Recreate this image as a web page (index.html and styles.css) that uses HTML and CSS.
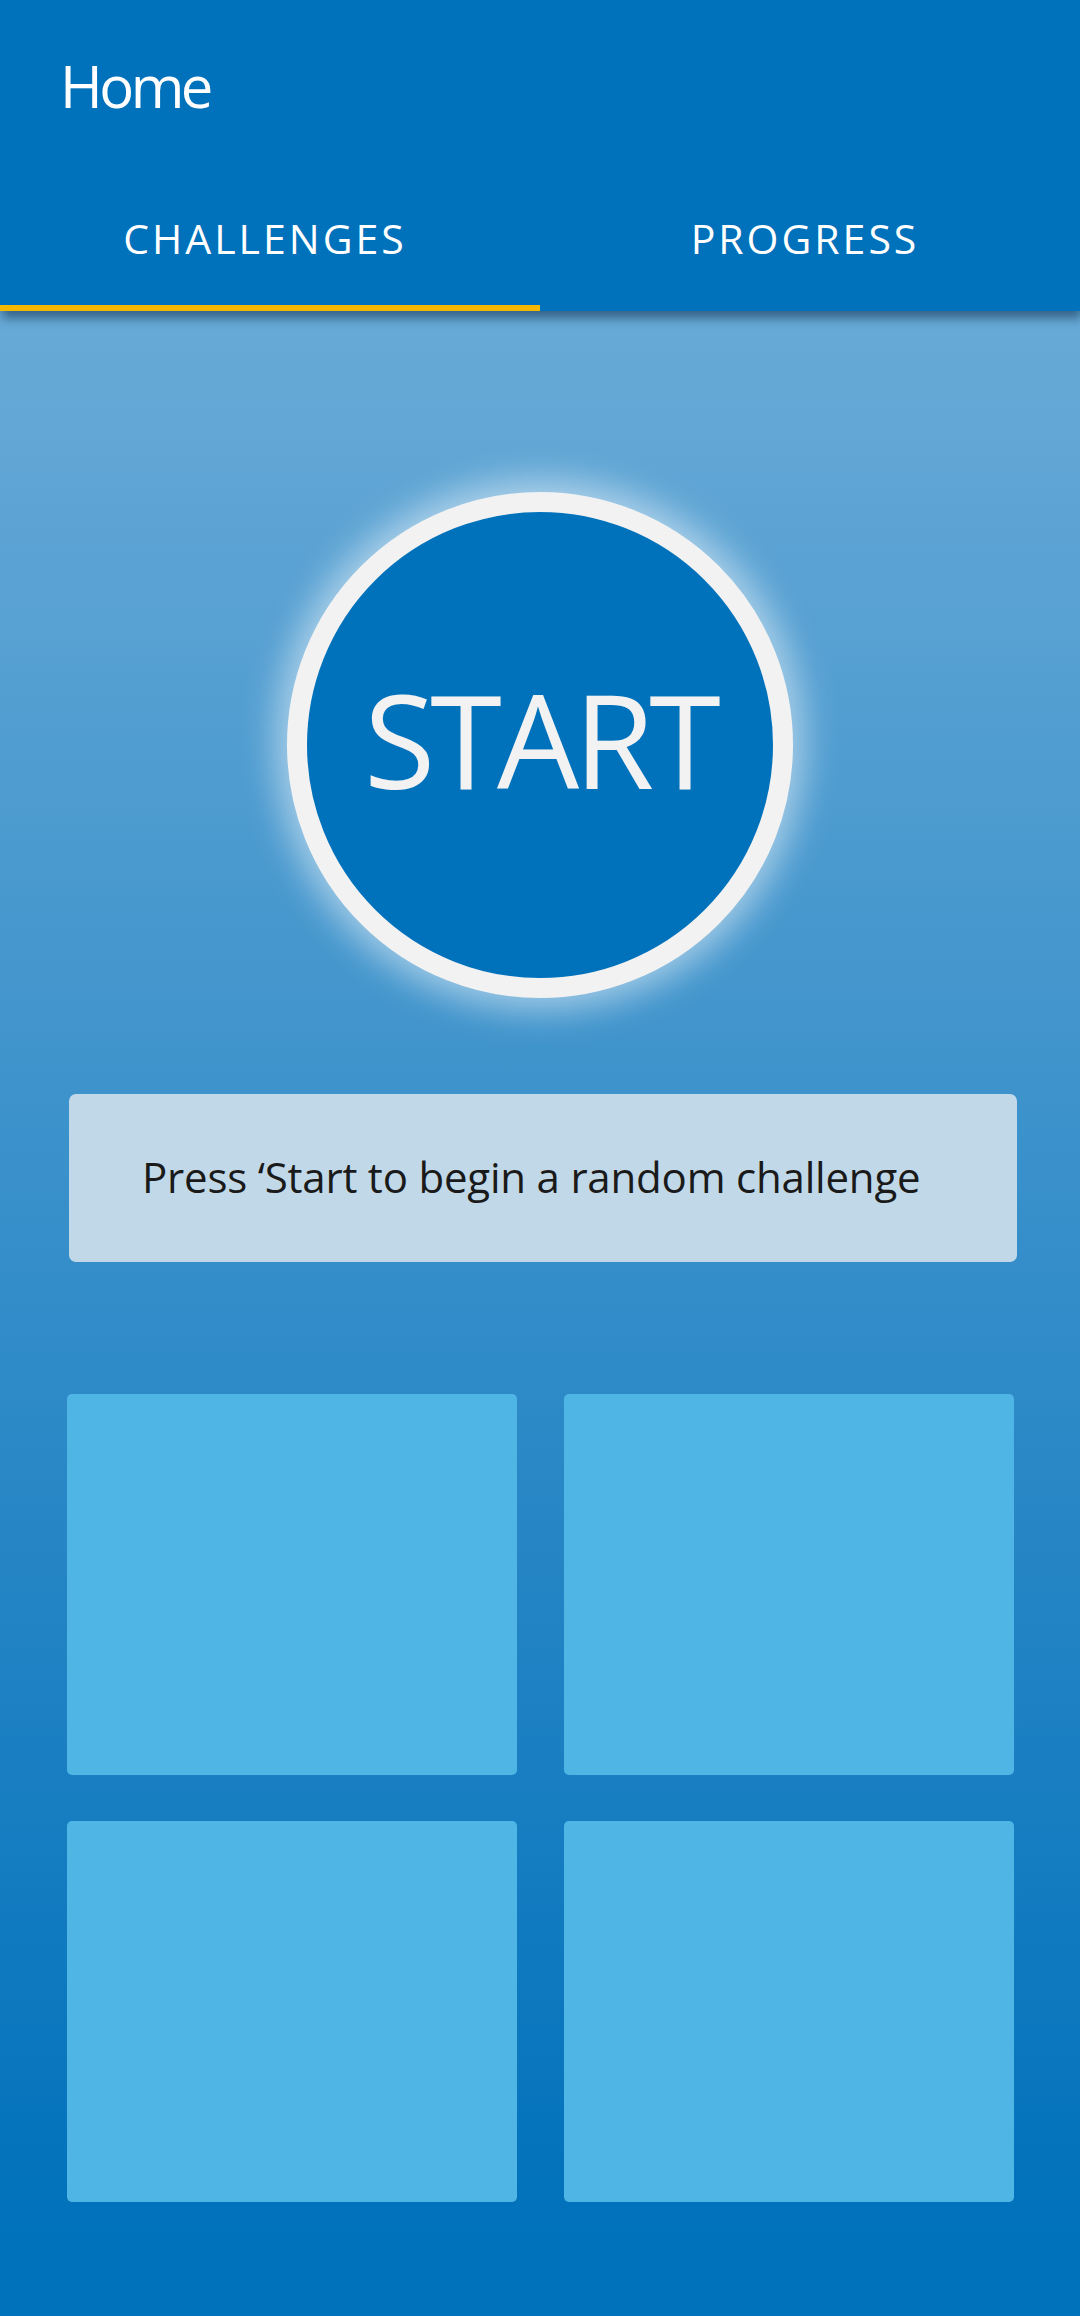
FILE: index.html
```html
<!DOCTYPE html>
<html lang="en">
<head>
<meta charset="utf-8">
<title>Home</title>
<link rel="stylesheet" href="styles.css">
</head>
<body>
<div class="app">
  <header class="appbar">
    <div class="titlebar"><h1 class="title">Home</h1></div>
    <nav class="tabs">
      <div class="tab active">CHALLENGES</div>
      <div class="tab">PROGRESS</div>
    </nav>
  </header>
  <main class="content">
    <div class="start-wrap">
      <button class="start">START</button>
    </div>
    <div class="hint">Press ‘Start to begin a random challenge</div>
    <div class="tiles">
      <div class="tile"></div>
      <div class="tile"></div>
      <div class="tile"></div>
      <div class="tile"></div>
    </div>
  </main>
</div>
</body>
</html>
```
FILE: styles.css
```css
html, body {
  margin: 0;
  padding: 0;
  height: 100%;
}
body {
  font-family: "Open Sans", "Noto Sans", sans-serif;
  background: #0071bb;
}
.app {
  display: flex;
  flex-direction: column;
  min-height: 100%;
}
.appbar {
  background: #0071bb;
  position: relative;
  z-index: 2;
  box-shadow: 2px 7px 10px rgba(10, 40, 70, 0.55);
}
.titlebar {
  height: 170px;
  box-sizing: border-box;
  padding: 50px 0 0 60px;
}
.title {
  margin: 0;
  font-weight: 400;
  font-size: 58px;
  line-height: 72px;
  color: #ffffff;
  letter-spacing: -3.5px;
}
.tabs {
  display: flex;
  height: 141px;
}
.tab {
  flex: 1;
  display: flex;
  justify-content: center;
  box-sizing: border-box;
  padding: 43px 10px 0 0;
  font-size: 41px;
  line-height: 50px;
  letter-spacing: 3px;
  color: #ffffff;
  border-bottom: 6px solid transparent;
}
.tab.active {
  border-bottom-color: #f5b800;
}
.content {
  flex: 1;
  display: flex;
  flex-direction: column;
  align-items: flex-start;
  background: linear-gradient(180deg, #68aad7 0%, #0071bb 96%, #0071bb 100%);
  padding: 181px 0 0 67px;
}
.start-wrap {
  display: flex;
  justify-content: center;
  width: 946px;
}
.start {
  width: 506px;
  height: 506px;
  border-radius: 50%;
  box-sizing: border-box;
  border: 20px solid #f2f2f2;
  background: #0071bb;
  color: #f2f2f2;
  font-family: "Open Sans", "Noto Sans", sans-serif;
  font-size: 130px;
  line-height: 1;
  letter-spacing: -5px;
  padding: 0 0 12px 0;
  box-shadow: 0 0 34px 12px rgba(255, 255, 255, 0.5);
}
.hint {
  margin: 96px 0 0 2px;
  width: 948px;
  height: 168px;
  box-sizing: border-box;
  background: #c1d8e8;
  border-radius: 7px;
  display: flex;
  align-items: center;
  padding: 0 0 4px 73px;
  font-size: 42px;
  color: #1a1a1a;
  letter-spacing: -0.2px;
}
.tiles {
  margin-top: 132px;
  width: 947px;
  display: grid;
  grid-template-columns: 450px 450px;
  grid-template-rows: 381px 381px;
  column-gap: 47px;
  row-gap: 46px;
}
.tile {
  background: #4fb5e5;
  border-radius: 5px;
}
```
